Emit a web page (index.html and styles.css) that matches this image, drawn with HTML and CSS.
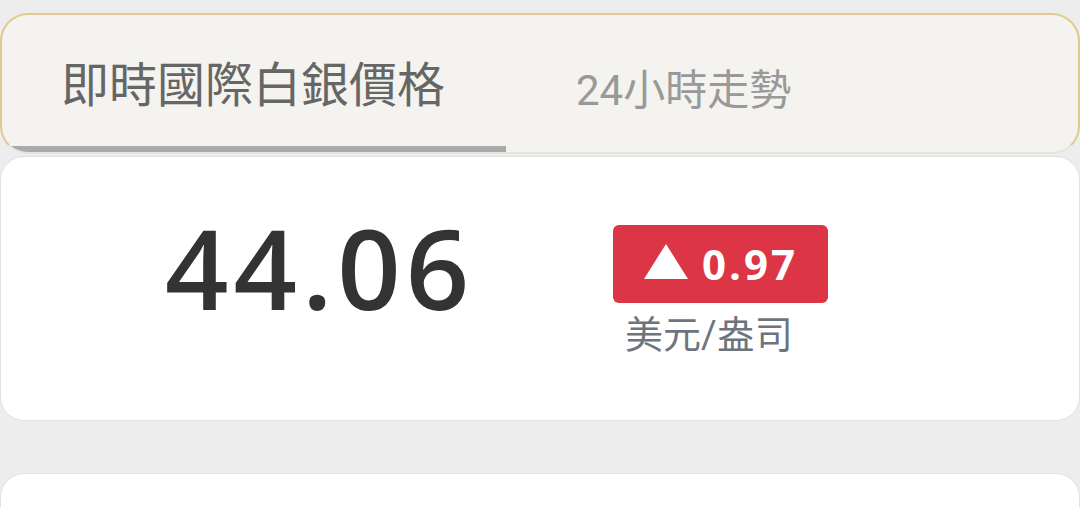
FILE: index.html
```html
<!DOCTYPE html>
<html lang="zh-Hant">
<head>
  <meta charset="UTF-8" />
  <meta name="viewport" content="width=device-width, initial-scale=1.0" />
  <title>即時國際白銀價格</title>
  <link rel="stylesheet" href="styles.css">
</head>
<body>
  <nav class="tabs">
    <a class="tab active" href="#">即時國際白銀價格</a>
    <a class="tab" href="#">24小時走勢</a>
  </nav>

  <section class="card quote">
    <div class="price">44.06</div>
    <div class="change">
      <div class="badge up"><span class="arrow"></span>0.97</div>
      <div class="unit">美元/盎司</div>
    </div>
  </section>

  <section class="card next"></section>
</body>
</html>
```

FILE: styles.css
```css
* {
  margin: 0;
  padding: 0;
  box-sizing: border-box;
}

body {
  background: #ededed;
  font-family: Roboto, "Noto Sans CJK TC", sans-serif;
}

.tabs {
  display: flex;
  margin-top: 13px;
  height: 141px;
  background: #f4f3ef;
  border: 2px solid #e2ca8f;
  border-bottom-color: #e6e4dd;
  border-radius: 28px;
  overflow: hidden;
}

.tab {
  display: flex;
  align-items: center;
  text-decoration: none;
  color: #999;
  font-size: 42px;
  padding: 6px 0 0 70px;
}

.tab.active {
  color: #666;
  font-size: 48px;
  width: 504px;
  padding: 0 0 0 59px;
  border-bottom: 6px solid #aaa;
}

.card {
  background: #fff;
  border: 1px solid #e2e2e2;
  border-radius: 24px;
}

.quote {
  margin-top: 2px;
  height: 265px;
  display: flex;
  align-items: center;
  padding-left: 164px;
}

.price {
  font-family: "Open Sans", sans-serif;
  font-weight: 600;
  font-size: 111px;
  letter-spacing: 5px;
  color: #333;
  width: 448px;
  margin-top: -43px;
}

.change {
  display: flex;
  flex-direction: column;
  align-items: flex-start;
  margin-top: 4px;
}

.badge {
  display: flex;
  align-items: center;
  width: 215px;
  height: 78px;
  padding-left: 31px;
  border-radius: 6px;
  color: #fff;
  font-family: "Open Sans", sans-serif;
  font-weight: 700;
  font-size: 42px;
  letter-spacing: 3px;
}

.badge.up {
  background: #dc3545;
}

.arrow {
  width: 0;
  height: 0;
  border-left: 22px solid transparent;
  border-right: 22px solid transparent;
  border-bottom: 35px solid #fff;
  margin: 0 14px 4px 0;
}

.unit {
  margin: 12px 0 0 12px;
  font-size: 38px;
  color: #6c757d;
  line-height: 1.1;
}

.next {
  margin-top: 52px;
  height: 34px;
  border-bottom: 0;
  border-radius: 24px 24px 0 0;
}
```
